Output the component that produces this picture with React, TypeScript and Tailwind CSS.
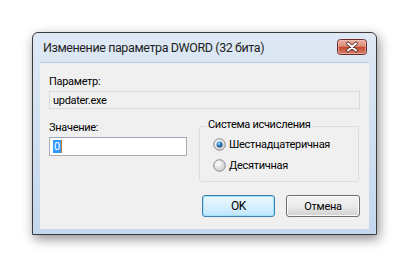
import React from "react";

function CloseIcon() {
  return (
    <svg width="30" height="16" viewBox="0 0 30 16">
      <defs>
        <linearGradient id="cg" x1="0" y1="0" x2="0" y2="1">
          <stop offset="0" stopColor="#eab1a3" />
          <stop offset="0.45" stopColor="#dd8f7d" />
          <stop offset="0.5" stopColor="#c7472f" />
          <stop offset="1" stopColor="#d7836f" />
        </linearGradient>
      </defs>
      <rect x="0.5" y="0.5" width="29" height="15" rx="3" fill="url(#cg)" stroke="#6b2a2a" />
      <rect x="1.5" y="1.5" width="27" height="13" rx="2" fill="none" stroke="#f3c9bf" strokeOpacity="0.6" />
      <path d="M11 4.5 L19 11.5 M19 4.5 L11 11.5" stroke="#4a2626" strokeWidth="3.6" strokeLinecap="round" />
      <path d="M11 4.5 L19 11.5 M19 4.5 L11 11.5" stroke="#ffffff" strokeWidth="2" strokeLinecap="round" />
    </svg>
  );
}

function Radio({ checked }: { checked: boolean }) {
  return (
    <svg width="13" height="13" viewBox="0 0 13 13" className="shrink-0">
      <defs>
        <radialGradient id={checked ? "rg1" : "rg0"} cx="0.4" cy="0.35" r="0.7">
          <stop offset="0" stopColor="#ffffff" />
          <stop offset="1" stopColor="#c8c8c8" />
        </radialGradient>
        <radialGradient id="dot" cx="0.4" cy="0.35" r="0.7">
          <stop offset="0" stopColor="#9ad8ff" />
          <stop offset="0.6" stopColor="#1f6fb5" />
          <stop offset="1" stopColor="#10406e" />
        </radialGradient>
      </defs>
      <circle cx="6.5" cy="6.5" r="5.8" fill={checked ? "url(#rg1)" : "url(#rg0)"} stroke="#8c8c8c" strokeWidth="1" />
      {checked && <circle cx="6.5" cy="6.5" r="3" fill="url(#dot)" />}
    </svg>
  );
}

export default function App() {
  const font = { fontFamily: 'Roboto, "Noto Sans", sans-serif' };
  return (
    <div className="relative w-[409px] h-[269px] bg-white overflow-hidden" style={font}>
      <div className="ml-[32px] mt-[32px] w-[345px] h-[203px] rounded-t-[6px] border border-[#3a3a3a] bg-gradient-to-b from-[#dfe9f5] to-[#c3d7ee] shadow-[2px_4px_12px_rgba(0,0,0,0.45)] flex flex-col">
        <div className="h-[29px] flex items-center justify-between pl-[10px] pr-[9px] pt-[1px]">
          <span className="text-[12.5px] tracking-[-0.4px] text-[#1e1e1e] leading-none">Изменение параметра DWORD (32 бита)</span>
          <div className="mt-[-2px]"><CloseIcon /></div>
        </div>
        <div className="mx-[7px] mb-[5px] flex-1 bg-[#f0f0f0] border-t border-[#b8c9dc] flex flex-col px-[9px] text-[11px] tracking-[-0.3px] text-black">
          <div className="h-[28px] flex items-end pb-[4px] leading-none">Параметр:</div>
          <div className="h-[18px] border border-[#d9d9d9] bg-[#f0f0f0] flex items-center pl-[3px] leading-none">updater.exe</div>
          <div className="flex mt-[9px]">
            <div className="w-[138px] flex flex-col">
              <div className="h-[18px] flex items-center leading-none pt-[1px]">Значение:</div>
              <div className="mt-[1px] h-[19px] border border-[#abadb3] border-t-[#9ba7b7] bg-white flex items-center pl-[3px]">
                <span className="bg-[#3399ff] text-white leading-[13px] px-[1px] border-r border-[#c47a29]">0</span>
              </div>
            </div>
            <div className="ml-[12px] w-[160px] h-[56px] mt-[8px] border border-[#d5dfe5] rounded-[3px] relative">
              <span className="absolute left-[7px] top-[-8px] bg-[#f0f0f0] px-[1px] leading-none">Система исчисления</span>
              <div className="flex flex-col pl-[13px] pt-[11px] gap-[8px]">
                <div className="flex items-center gap-[3px] leading-none"><Radio checked /><span>Шестнадцатеричная</span></div>
                <div className="flex items-center gap-[3px] leading-none"><Radio checked={false} /><span>Десятичная</span></div>
              </div>
            </div>
          </div>
          <div className="flex justify-end gap-[11px] mt-[13px]">
            <button className="w-[73px] h-[22px] rounded-[3px] border border-[#3c7fb1] bg-gradient-to-b from-[#eaf6fd] via-[#d9f0fc] to-[#bee6fd] shadow-[inset_0_0_0_1px_#9fe0fb] text-[12px] leading-none">OK</button>
            <button className="w-[74px] h-[22px] rounded-[3px] border border-[#707070] bg-gradient-to-b from-[#f2f2f2] via-[#ebebeb] to-[#cfcfcf] shadow-[inset_0_0_0_1px_#fbfbfb] text-[11px] leading-none">Отмена</button>
          </div>
        </div>
      </div>
    </div>
  );
}
